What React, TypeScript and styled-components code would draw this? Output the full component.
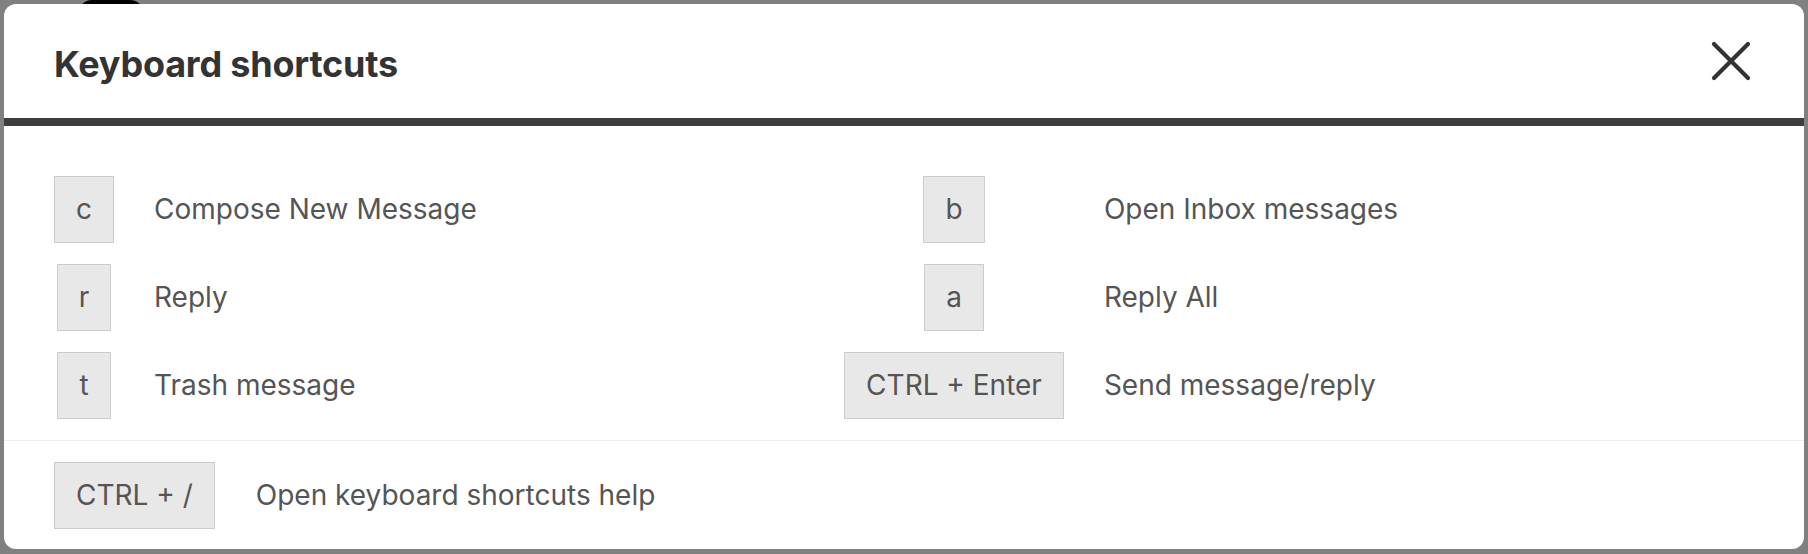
import React from "react";
import styled, { createGlobalStyle } from "styled-components";

const GlobalStyle = createGlobalStyle`
  html, body {
    margin: 0;
    padding: 0;
    background: #808080;
  }
  body {
    font-family: "Inter", "Noto Sans", sans-serif;
    overflow: hidden;
  }
`;

const Backdrop = styled.div`
  display: flex;
  flex-direction: column;
  width: 1808px;
  height: 554px;
  box-sizing: border-box;
  padding: 0 4px 5px 4px;
`;

const TopStrip = styled.div`
  height: 4px;
  overflow: hidden;
  display: flex;
  flex-shrink: 0;
`;

const Avatar = styled.div`
  margin-left: 74px;
  width: 66px;
  height: 60px;
  flex-shrink: 0;
  background: #000;
  border-radius: 14px 14px 0 0;
`;

const Modal = styled.div`
  display: flex;
  flex-direction: column;
  background: #ffffff;
  border-radius: 12px;
  overflow: hidden;
  flex: 1;
`;

const Header = styled.div`
  height: 114px;
  display: flex;
  align-items: center;
  justify-content: space-between;
  padding: 0 53px 0 50px;
  border-bottom: 8px solid #3d3d3d;
`;

const Title = styled.h2`
  margin: 0;
  font-family: "Inter", "Roboto", sans-serif;
  font-weight: 700;
  font-size: 36px;
  line-height: 44px;
  letter-spacing: -0.2px;
  color: #333333;
  padding-top: 6px;
`;

const CloseButton = styled.button`
  display: flex;
  align-items: center;
  justify-content: center;
  padding: 0;
  margin: 0;
  border: none;
  background: transparent;
  cursor: pointer;
  color: #333333;
`;

const ShortcutGrid = styled.div`
  display: grid;
  grid-template-columns: auto 1fr auto 1fr;
  column-gap: 40px;
  row-gap: 21px;
  align-items: center;
  padding: 50px 50px 21px;
`;

const Key = styled.kbd`
  justify-self: center;
  display: inline-block;
  box-sizing: border-box;
  padding: 16px 21px;
  background: #e8e8e8;
  border: 1px solid #cccccc;
  font-family: "Inter", "Noto Sans", sans-serif;
  font-size: 28px;
  line-height: 33px;
  color: #555555;
  white-space: nowrap;
`;

const Description = styled.span`
  font-size: 28px;
  line-height: 33px;
  color: #555555;
  white-space: nowrap;
`;

const Footer = styled.div`
  display: flex;
  align-items: center;
  gap: 41px;
  border-top: 1px solid #ececec;
  padding: 21px 50px 20px;
`;

const shortcuts: [string, string, string, string][] = [
  ["c", "Compose New Message", "b", "Open Inbox messages"],
  ["r", "Reply", "a", "Reply All"],
  ["t", "Trash message", "CTRL + Enter", "Send message/reply"],
];

export default function App() {
  return (
    <>
      <GlobalStyle />
      <Backdrop>
        <TopStrip>
          <Avatar />
        </TopStrip>
        <Modal>
          <Header>
            <Title>Keyboard shortcuts</Title>
            <CloseButton aria-label="Close">
              <svg width="40" height="40" viewBox="0 0 40 40" fill="none">
                <path
                  d="M3 3 L37 37 M37 3 L3 37"
                  stroke="currentColor"
                  strokeWidth="4.2"
                  strokeLinecap="round"
                />
              </svg>
            </CloseButton>
          </Header>
          <ShortcutGrid>
            {shortcuts.map(([k1, d1, k2, d2]) => (
              <React.Fragment key={k1}>
                <Key>{k1}</Key>
                <Description>{d1}</Description>
                <Key>{k2}</Key>
                <Description>{d2}</Description>
              </React.Fragment>
            ))}
          </ShortcutGrid>
          <Footer>
            <Key>CTRL + /</Key>
            <Description>Open keyboard shortcuts help</Description>
          </Footer>
        </Modal>
      </Backdrop>
    </>
  );
}
